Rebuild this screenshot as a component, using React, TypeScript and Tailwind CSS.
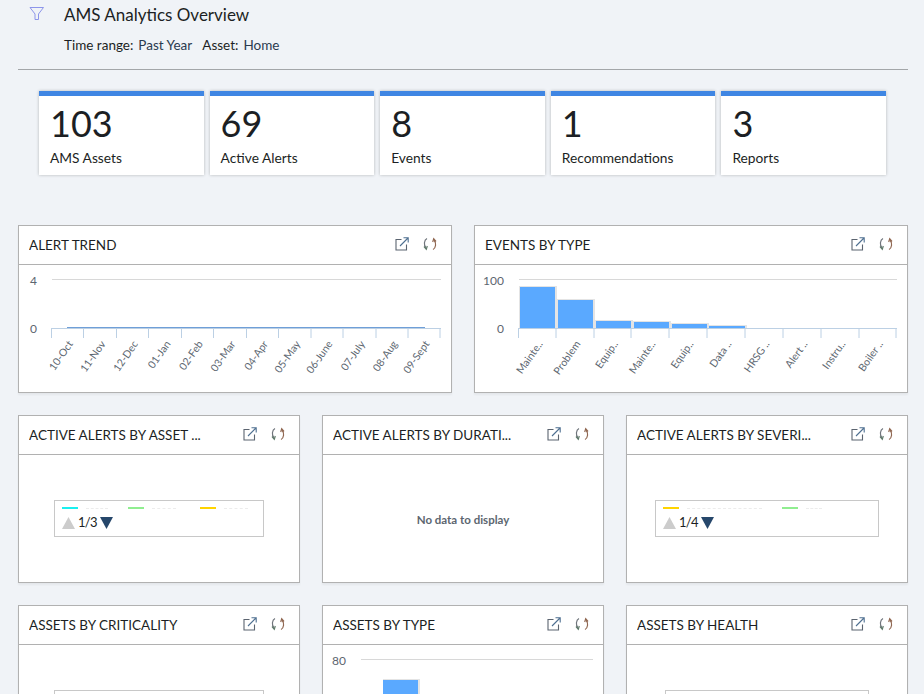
import type { ReactNode } from 'react';

const kpis = [
  { value: '103', label: 'AMS Assets' },
  { value: '69', label: 'Active Alerts' },
  { value: '8', label: 'Events' },
  { value: '1', label: 'Recommendations' },
  { value: '3', label: 'Reports' },
];

const trendLabels = ['10-Oct', '11-Nov', '12-Dec', '01-Jan', '02-Feb', '03-Mar', '04-Apr', '05-May', '06-June', '07-July', '08-Aug', '09-Sept'];
const trendTicks = [32.5, 64.5, 97.5, 129.5, 162.5, 194.5, 227.5, 259.5, 292, 324, 357, 389, 421];

const eventLabels = ['Mainte..', 'Problem', 'Equip..', 'Mainte..', 'Equip..', 'Data ..', 'HRSG ..', 'Alert ..', 'Instru..', 'Boiler ..'];
const eventTicks = [43.5, 81, 119, 156, 194, 232, 270, 308, 346, 384, 421];
const eventBars = [
  { x: 45, w: 35, top: 22 },
  { x: 83, w: 35, top: 35 },
  { x: 121, w: 35, top: 56 },
  { x: 159, w: 35, top: 57 },
  { x: 197, w: 35, top: 59 },
  { x: 234, w: 36, top: 61 },
];

function ExternalIcon() {
  return (
    <svg width="14" height="14" viewBox="0 0 14 14" fill="none" strokeWidth="1.1">
      <path d="M6.5 2.5H1v10.5h10.5V7.5" stroke="#5b6470" />
      <path d="M5 9l8-8M8.5 .8h4.7v4.7" stroke="#4f7091" />
    </svg>
  );
}

function RefreshIcon() {
  return (
    <svg width="14" height="14" viewBox="0 0 14 14" fill="none" strokeWidth="1.2">
      <path d="M4 1.5C1 3 .5 8 3 11" stroke="#70757c" />
      <path d="M1 9.5l2.3 2.8 1-3.3" stroke="#5f7a6a" />
      <path d="M10 12.5c3-1.5 3.5-6.5 1-9.5" stroke="#8f6650" />
      <path d="M13 4.5L10.7 1.7l-1 3.3" stroke="#8f6650" />
    </svg>
  );
}

function Card({ title, children }: { title: string; children: ReactNode }) {
  return (
    <div className="bg-white border border-[#b1b1b1] h-[168px] shadow-[0_2px_2px_rgba(0,0,0,0.05)]">
      <div className="h-[39px] border-b border-[#b1b1b1] flex items-center pl-[10px] pr-[14px]">
        <h2 className="flex-1 min-w-0 text-[13.5px] text-[#1c1f24] whitespace-nowrap overflow-hidden">{title}</h2>
        <div className="flex items-center gap-[14px] shrink-0 -mt-[2px]">
          <ExternalIcon />
          <RefreshIcon />
        </div>
      </div>
      {children}
    </div>
  );
}

function AxisLabels({ labels, ticks }: { labels: string[]; ticks: number[] }) {
  return (
    <>
      {labels.map((label, i) => (
        <text key={i} fontSize="10.5" fill="#5c6670" textAnchor="end" transform={`translate(${(ticks[i] + ticks[i + 1]) / 2 + 6} 79) rotate(-55)`}>
          {label}
        </text>
      ))}
    </>
  );
}

function TrendChart() {
  return (
    <svg width="432" height="127" className="block" fontFamily="Lato, sans-serif">
      <line x1="33" y1="14.5" x2="422" y2="14.5" stroke="#d8d8d8" />
      <text x="18" y="20" fontSize="12" fill="#5c6670" textAnchor="end">4</text>
      <text x="18" y="68" fontSize="12" fill="#5c6670" textAnchor="end">0</text>
      <line x1="32" y1="63.5" x2="422" y2="63.5" stroke="#bcd0e4" />
      {trendTicks.map(x => (
        <line key={x} x1={x} y1="63" x2={x} y2="73" stroke="#bcd0e4" />
      ))}
      <line x1="48" y1="62.5" x2="406" y2="62.5" stroke="#6f9fd8" />
      <AxisLabels labels={trendLabels} ticks={trendTicks} />
    </svg>
  );
}

function EventsChart() {
  return (
    <svg width="432" height="127" className="block" fontFamily="Lato, sans-serif">
      <line x1="44" y1="14.5" x2="422" y2="14.5" stroke="#d8d8d8" />
      <text x="29" y="20" fontSize="12" fill="#5c6670" textAnchor="end">100</text>
      <text x="29" y="68" fontSize="12" fill="#5c6670" textAnchor="end">0</text>
      {eventBars.map(b => (
        <g key={b.x}>
          <rect x={b.x - 1} y={b.top - 1} width={b.w + 3} height={63 - b.top + 1} fill="#e4e4e4" />
          <rect x={b.x} y={b.top} width={b.w} height={63 - b.top} fill="#5aa9ff" />
        </g>
      ))}
      <line x1="43" y1="63.5" x2="422" y2="63.5" stroke="#bcd0e4" />
      {eventTicks.map(x => (
        <line key={x} x1={x} y1="63" x2={x} y2="73" stroke="#bcd0e4" />
      ))}
      <AxisLabels labels={eventLabels} ticks={eventTicks} />
    </svg>
  );
}

function AssetTypeChart() {
  return (
    <svg width="280" height="50" className="block" fontFamily="Lato, sans-serif">
      <line x1="38" y1="14.5" x2="270" y2="14.5" stroke="#d8d8d8" />
      <text x="23" y="20" fontSize="12" fill="#5c6670" textAnchor="end">80</text>
      <rect x="60" y="34" width="37" height="16" fill="#e4e4e4" />
      <rect x="60" y="35" width="35" height="15" fill="#5aa9ff" />
    </svg>
  );
}

type LegendItem = { color: string; mr: string; faint: string };

function Legend({ width, items, page }: { width: string; items: LegendItem[]; page?: string }) {
  return (
    <div className="pt-[45px] flex justify-center">
      <div className={`${width} h-[37px] border border-[#c8c8c8] pl-[7px] pt-[6px]`}>
        <div className="flex h-[2px]">
          {items.map(item => (
            <div key={item.color} className={`flex items-center gap-[8px] ${item.mr}`}>
              <span className="w-[16px] h-[2px]" style={{ backgroundColor: item.color }} />
              <span className={`${item.faint} border-t border-dashed border-[#ececec]`} />
            </div>
          ))}
        </div>
        {page && (
          <div className="flex items-center gap-[3px] mt-[7px] h-[13px] text-[13px] tracking-[-0.7px] text-[#1c1f24]">
            <svg width="13" height="12" viewBox="0 0 13 12"><path d="M6.5 0L13 12H0z" fill="#cccccc" /></svg>
            <span>{page}</span>
            <svg width="13" height="12" viewBox="0 0 13 12"><path d="M0 0h13L6.5 12z" fill="#26476b" /></svg>
          </div>
        )}
      </div>
    </div>
  );
}

export default function App() {
  return (
    <div className="h-screen overflow-hidden bg-[#f0f3f7] pl-[18px] pr-[16px] text-[#1c1f24] font-['Lato',sans-serif]">
      {/* Header */}
      <div className="h-[69px] flex">
        <svg width="16" height="15" viewBox="0 0 16 15" fill="none" className="ml-[11px] mt-[6px] shrink-0">
          <path d="M1 1.5h13.5L9.5 8v5.5H6V8z" stroke="#8d95ea" strokeWidth="1" />
        </svg>
        <div className="ml-[19px]">
          <h1 className="text-[17px] leading-[24px] mt-[3px]">AMS Analytics Overview</h1>
          <p className="text-[13.5px] leading-[18px] mt-[9px]">
            <span className="mr-[5px]">Time range:</span>
            <span className="mr-[10px] text-[#2a3a4f]">Past Year</span>
            <span className="mr-[5px]">Asset:</span>
            <span className="text-[#2a3a4f]">Home</span>
          </p>
        </div>
      </div>
      <div className="border-t border-[#a3a6a9] h-0" />

      {/* KPI tiles */}
      <div className="grid grid-cols-5 gap-[6px] w-[847px] ml-[21px] mt-[21px]">
        {kpis.map(kpi => (
          <div key={kpi.label} className="h-[84px] bg-white border-t-[5px] border-[#3f86e3] shadow-[0_0_3px_rgba(0,0,0,0.25)] pl-[11px]">
            <div className="text-[36px] leading-[44px] mt-[5px] text-[#1c1f24]">{kpi.value}</div>
            <div className="text-[13.75px] leading-[18px] mt-[4px]">{kpi.label}</div>
          </div>
        ))}
      </div>

      {/* Charts */}
      <div className="grid grid-cols-[434px_1fr] gap-[22px] mt-[50px]">
        <Card title="ALERT TREND"><TrendChart /></Card>
        <Card title="EVENTS BY TYPE"><EventsChart /></Card>
      </div>
      <div className="grid grid-cols-[282px_282px_1fr] gap-[22px] mt-[22px]">
        <Card title="ACTIVE ALERTS BY ASSET ...">
          <Legend
            width="w-[210px]"
            page="1/3"
            items={[
              { color: '#19f0f0', mr: 'mr-[20px]', faint: 'w-[22px]' },
              { color: '#90ee90', mr: 'mr-[24px]', faint: 'w-[24px]' },
              { color: '#ffd400', mr: '', faint: 'w-[24px]' },
            ]}
          />
        </Card>
        <Card title="ACTIVE ALERTS BY DURATI...">
          <div className="h-[130px] flex items-center justify-center text-[11.5px] font-bold text-[#5c6670]">No data to display</div>
        </Card>
        <Card title="ACTIVE ALERTS BY SEVERI...">
          <Legend
            width="w-[224px]"
            page="1/4"
            items={[
              { color: '#ffd400', mr: 'mr-[20px]', faint: 'w-[75px]' },
              { color: '#90ee90', mr: '', faint: 'w-[16px]' },
            ]}
          />
        </Card>
      </div>
      <div className="grid grid-cols-[282px_282px_1fr] gap-[22px] mt-[22px]">
        <Card title="ASSETS BY CRITICALITY">
          <Legend width="w-[210px]" items={[]} />
        </Card>
        <Card title="ASSETS BY TYPE"><AssetTypeChart /></Card>
        <Card title="ASSETS BY HEALTH">
          <Legend width="w-[204px]" items={[]} />
        </Card>
      </div>
    </div>
  );
}
